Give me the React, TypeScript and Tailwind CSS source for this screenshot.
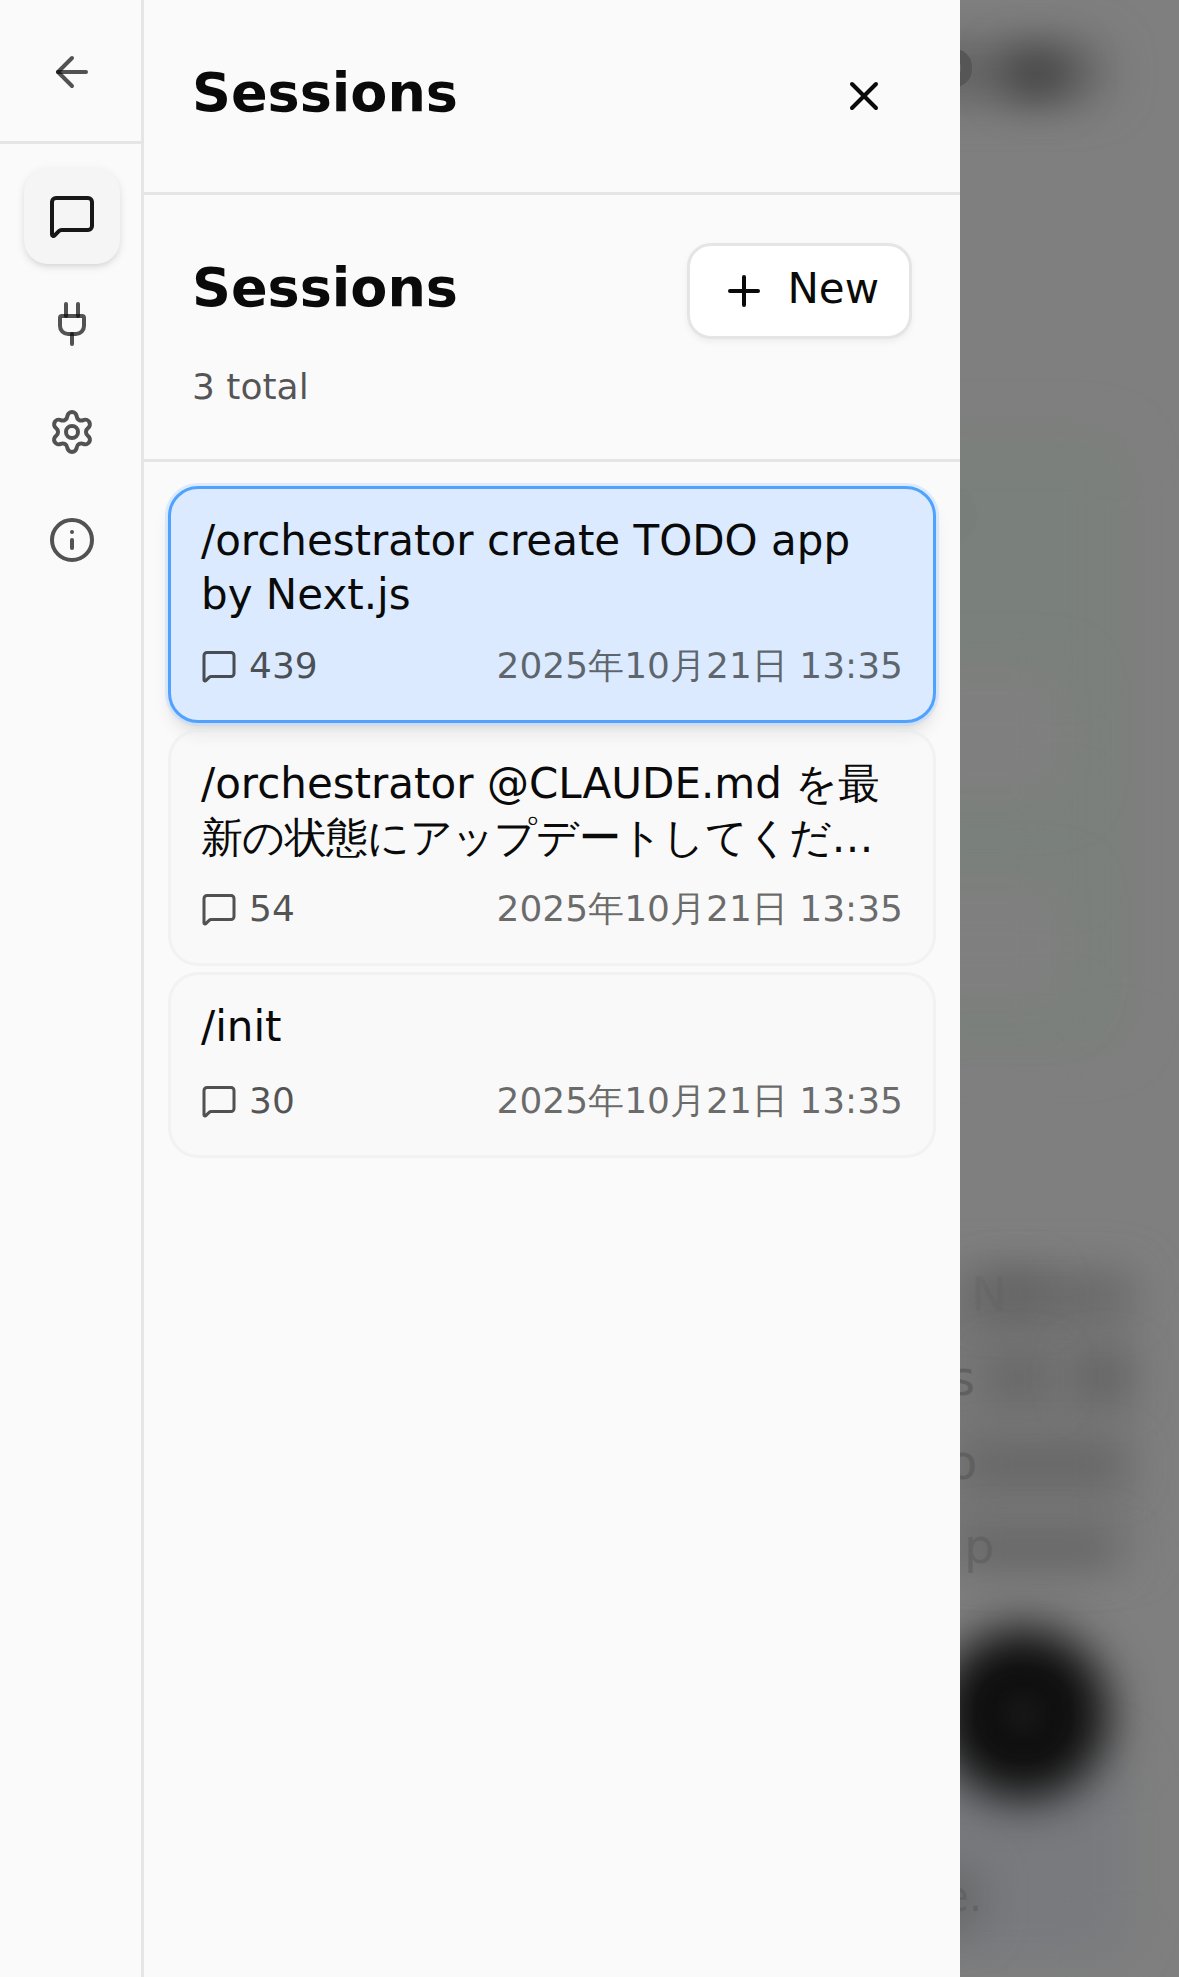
import type { ReactNode } from "react";
import { ArrowLeft, Info, MessageSquare, Plug, Plus, Settings, X } from "lucide-react";

type Session = { title: ReactNode; count: number; date: string; active?: boolean; lines: 1 | 2 };

const sessions: Session[] = [
  { title: "/orchestrator create TODO app by Next.js", count: 439, date: "2025年10月21日 13:35", active: true, lines: 2 },
  {
    title: (
      <>
        /orchestrator @CLAUDE.md <span className="tracking-[-0.7px]">を最新の状態にアップデートしてくだ…</span>
      </>
    ),
    count: 54,
    date: "2025年10月21日 13:35",
    lines: 2,
  },
  { title: "/init", count: 30, date: "2025年10月21日 13:35", lines: 1 },
];

function RailButton({ active, label, children }: { active?: boolean; label: string; children: ReactNode }) {
  return (
    <button
      aria-label={label}
      className={
        active
          ? "flex size-24 items-center justify-center rounded-3xl bg-[#f5f5f5] text-[#171717] shadow-[0_3px_9px_rgba(0,0,0,0.1),0_3px_6px_-3px_rgba(0,0,0,0.1)]"
          : "flex size-24 items-center justify-center rounded-3xl text-[#0a0a0a]/70"
      }
    >
      {children}
    </button>
  );
}

function Rail() {
  return (
    <nav className="flex w-36 shrink-0 flex-col border-r-[3px] border-[#e5e5e5]">
      <div className="flex h-36 w-36 shrink-0 items-center justify-center">
        <ArrowLeft className="size-12 text-[#0a0a0a]/70" />
      </div>
      <div className="-mt-[3px] h-[3px] shrink-0 bg-[#e5e5e5]" />
      <div className="flex w-36 flex-col items-center gap-3 pt-6">
        <RailButton active label="Sessions"><MessageSquare className="size-12" /></RailButton>
        <RailButton label="MCP"><Plug className="size-12" /></RailButton>
        <RailButton label="Settings"><Settings className="size-12" /></RailButton>
        <RailButton label="Info"><Info className="size-12" /></RailButton>
      </div>
    </nav>
  );
}

function SessionCard({ session }: { session: Session }) {
  return (
    <article
      className={
        session.active
          ? "rounded-[30px] border-[3px] border-[#51a2ff] bg-[#dbeafe] p-[30px] shadow-[0_0_0_3px_rgba(190,219,255,0.5),0_12px_18px_-3px_rgba(0,0,0,0.1),0_6px_12px_-6px_rgba(0,0,0,0.1)]"
          : "rounded-[30px] border-[3px] border-[#e5e5e5]/40 bg-[#f5f5f5]/20 p-[30px]"
      }
    >
      <h3
        className={
          session.lines === 2
            ? "-mt-[5.5px] h-[110.5px] text-[42px] leading-[54px]"
            : "-mt-[5.5px] h-[59.5px] text-[42px] leading-[54px]"
        }
      >
        {session.title}
      </h3>
      <div className="mt-[18px] flex h-12 items-center justify-between text-4xl leading-[48px]">
        <div className="flex items-center gap-3 text-[#0a0a0a]/70">
          <MessageSquare className="size-9" />
          <span className="pb-px">{session.count}</span>
        </div>
        <span className="pb-px text-[#0a0a0a]/60">{session.date}</span>
      </div>
    </article>
  );
}

/* Dimmed, blurred chat page that stays visible beside the drawer. */
function Backdrop() {
  return (
    <div aria-hidden className="relative flex-1 overflow-hidden bg-[#7f7f7f]">
      <div className="absolute top-[48px] -left-16 h-[48px] w-[210px] rounded-full bg-[#5e5e5e] blur-[24px]" />
      <div className="absolute top-[54px] left-[44px] h-[40px] w-[66px] rounded-full bg-[#3c3c3c] blur-[22px]" />
      <div className="absolute top-[49px] -left-[23px] h-[38px] w-[35px] rounded-full border-[11px] border-[#565656]" />

      <div className="absolute top-[436px] -left-16 h-[612px] w-[230px] rounded-[36px] bg-[#7a807b] blur-[24px]" />
      <div className="absolute top-[668px] -left-16 h-[132px] w-[178px] rounded-3xl bg-[#7f7f7f] blur-[24px]" />
      <div className="absolute top-[878px] -left-16 h-[132px] w-[178px] rounded-3xl bg-[#7f7f7f] blur-[24px]" />
      <div className="absolute top-[484px] -left-[46px] size-[62px] rounded-full border border-[#70807a]/60 bg-[#747e78]/30 blur-[1px]" />

      <div className="absolute top-[1276px] -left-8 h-[280px] w-[204px] bg-[#777777] blur-[24px]" />
      <div className="absolute top-[1278px] left-[8px] h-[34px] w-[160px] bg-[#666666] blur-[20px]" />
      <div className="absolute top-[1276px] left-[24px] h-[36px] w-[60px] bg-[#646464] blur-[20px]" />
      <div className="absolute top-[1360px] left-[30px] h-[36px] w-[56px] bg-[#606060] blur-[22px]" />
      <div className="absolute top-[1358px] left-[120px] h-[38px] w-[46px] bg-[#5a5a5a] blur-[22px]" />
      <div className="absolute top-[1448px] left-[4px] h-[34px] w-[160px] bg-[#636363] blur-[20px]" />
      <div className="absolute top-[1532px] left-0 h-[34px] w-[154px] bg-[#636363] blur-[20px]" />

      <div className="absolute top-[1750px] -left-16 h-[206px] w-[228px] rounded-[36px] bg-[#787a7e] blur-[24px]" />
      <div className="absolute top-[1870px] -left-16 h-[60px] w-[84px] bg-[#686869] blur-[20px]" />
      <div className="absolute top-[1628px] -left-[23px] size-[172px] rounded-full bg-[#0e0e0e] blur-[23px]" />
      <div className="absolute top-[1698px] left-[47px] size-8 rounded-full bg-[#222222] blur-[16px]" />

      <span className="absolute top-[1266px] left-[11px] text-5xl leading-[56px] text-[#606060]/30">N</span>
      <span className="absolute top-[1350px] -left-[10px] text-5xl leading-[56px] text-[#606060]">s</span>
      <span className="absolute top-[1434px] -left-[12px] text-5xl leading-[56px] text-[#606060]">o</span>
      <span className="absolute top-[1518px] left-[4px] text-5xl leading-[56px] text-[#5c5c5c]/60">p</span>
      <span className="absolute top-[1872px] -left-[17px] text-[42px] leading-[50px] text-[#606062]/80">e.</span>
    </div>
  );
}

export default function App() {
  return (
    <div className="flex h-[1977px] w-[1179px] overflow-hidden bg-[#fafafa] font-['DejaVu_Sans',sans-serif] text-[#0a0a0a]">
      <Rail />
      <main className="flex w-[816px] shrink-0 flex-col">
        <header className="flex h-[195px] shrink-0 items-center justify-between border-b-[3px] border-[#e5e5e5] px-12">
          <h1 className="pb-[7px] text-[54px] leading-[84px] font-bold">Sessions</h1>
          <button aria-label="Close" className="flex size-24 items-center justify-center">
            <X className="size-12" />
          </button>
        </header>
        <section className="h-[267px] shrink-0 border-b-[3px] border-[#e5e5e5] px-12 pt-12">
          <div className="flex h-24 items-center justify-between">
            <h2 className="pb-[7px] text-[54px] leading-[84px] font-bold">Sessions</h2>
            <button className="flex h-24 items-center gap-[19px] rounded-3xl border-[3px] border-[#e5e5e5] bg-white px-[30px] text-[42px] leading-[60px] shadow-[0_3px_6px_rgba(0,0,0,0.05)]">
              <Plus className="size-12" />
              <span className="pb-[5px]">New</span>
            </button>
          </div>
          <p className="mt-[23.5px] text-4xl leading-[48px] text-[#0a0a0a]/70">3 total</p>
        </section>
        <div className="flex flex-col gap-[6px] p-6">
          {sessions.map((s) => (
            <SessionCard key={s.count} session={s} />
          ))}
        </div>
      </main>
      <Backdrop />
    </div>
  );
}
